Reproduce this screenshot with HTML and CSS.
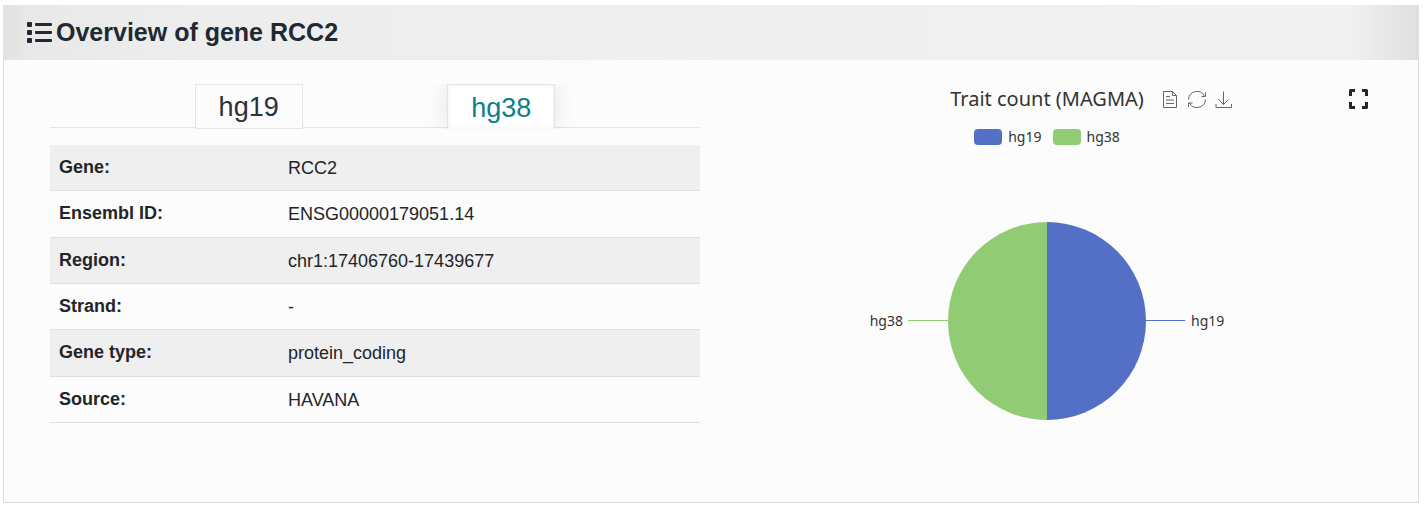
FILE: index.html
```html
<!DOCTYPE html>
<html lang="en">
<head>
<meta charset="utf-8">
<meta name="viewport" content="width=device-width, initial-scale=1">
<title>Overview of gene RCC2</title>
<link rel="stylesheet" href="styles.css">
</head>
<body>
<section class="card">
  <header class="card-header">
    <svg class="list-icon" viewBox="0 0 25 22" aria-hidden="true">
      <rect x="0" y="1" width="5" height="5" rx="1"/><rect x="0" y="9" width="5" height="5" rx="1"/><rect x="0" y="17" width="5" height="5" rx="1"/>
      <rect x="8" y="2" width="17" height="3" rx="1"/><rect x="8" y="10" width="17" height="3" rx="1"/><rect x="8" y="18" width="17" height="3" rx="1"/>
    </svg>
    <h1 class="card-title">Overview of gene RCC2</h1>
  </header>
  <div class="card-body">
    <div class="details">
      <div class="tabs" role="tablist">
        <button class="tab" type="button" role="tab" aria-selected="false">hg19</button>
        <button class="tab tab-active" type="button" role="tab" aria-selected="true">hg38</button>
      </div>
      <table class="gene-table">
        <tbody>
          <tr><th scope="row">Gene:</th><td>RCC2</td></tr>
          <tr><th scope="row">Ensembl ID:</th><td>ENSG00000179051.14</td></tr>
          <tr><th scope="row">Region:</th><td>chr1:17406760-17439677</td></tr>
          <tr><th scope="row">Strand:</th><td>-</td></tr>
          <tr><th scope="row">Gene type:</th><td>protein_coding</td></tr>
          <tr><th scope="row">Source:</th><td>HAVANA</td></tr>
        </tbody>
      </table>
    </div>
    <div class="chart">
      <div class="chart-head">
        <h2 class="chart-title">Trait count (MAGMA)</h2>
        <div class="toolbox">
          <button class="tool" type="button" aria-label="Data view">
            <svg viewBox="0 0 20 20"><path d="M3.500 2.500h9l4 4v12h-13zM12.500 2.500v4h4M6 7.500h4M6 11h8M6 14.500h8"/></svg>
          </button>
          <button class="tool" type="button" aria-label="Restore">
            <svg viewBox="0 0 20 20"><path d="M1.500 10.500A8.500 8.500 0 0 1 17.500 7M18.500 10.500A8.500 8.500 0 0 1 2.500 14M18.500 3.500v4h-4M1.500 18v-4h4"/></svg>
          </button>
          <button class="tool" type="button" aria-label="Save as image">
            <svg viewBox="0 0 20 20"><path d="M9.500 2.500v13M4.500 10.500l5 5 5-5M2 15v3.500h15.500V15"/></svg>
          </button>
        </div>
        <button class="expand" type="button" aria-label="Full screen">
          <svg viewBox="0 0 20 20"><path d="M2.500 7V1.500H7M14 1.500h4.500V7M18.500 13v5.500H14M7 18.500H2.500V13"/></svg>
        </button>
      </div>
      <ul class="legend">
        <li class="legend-item"><span class="swatch swatch-blue"></span>hg19</li>
        <li class="legend-item"><span class="swatch swatch-green"></span>hg38</li>
      </ul>
      <svg class="pie" viewBox="0 0 360 200" role="img" aria-label="hg19 and hg38 with equal shares">
        <path fill="#5470c6" d="M180 1a99 99 0 0 1 0 198z"/>
        <path fill="#91cc75" d="M180 1a99 99 0 0 0 0 198z"/>
        <path stroke="#5470c6" d="M279 99.500h39"/>
        <path stroke="#91cc75" d="M81 99.500H41"/>
        <text x="324" y="105">hg19</text>
        <text x="36" y="105" text-anchor="end">hg38</text>
      </svg>
    </div>
  </div>
</section>
</body>
</html>
```
FILE: styles.css
```css
* {
  box-sizing: border-box;
}

body {
  margin: 0;
  padding: 5px 6px 7px 3px;
  background: #fff;
  color: #212529;
  font-family: "Liberation Sans", Arial, sans-serif;
}

button {
  margin: 0;
  padding: 0;
  border: 0;
  background: none;
  color: inherit;
  font: inherit;
  cursor: pointer;
}

.card {
  border: 1px solid #dcdcdc;
  border-top: 0;
  background: #fcfcfc;
}

.card-header {
  display: flex;
  align-items: center;
  gap: 4px;
  height: 55px;
  margin: 0 -1px;
  padding: 0 24px 2px;
  background: linear-gradient(90deg, #e2e2e2 0, #e9e9e9 2%, #ededed 13%, #f1f1f1 95%, #dfdfdf 100%);
  color: #212933;
}

.list-icon {
  width: 25px;
  height: 22px;
  fill: currentColor;
}

.card-title {
  margin: 0;
  font-size: 25px;
  line-height: 30px;
}

.card-body {
  display: grid;
  grid-template-columns: 650fr 642fr;
  gap: 26px;
  padding: 24px 50px 79px 46px;
}

.tabs {
  display: flex;
  justify-content: space-evenly;
  overflow: hidden;
  background: linear-gradient(#e3e4ec, #e3e4ec) 0 43px / 100% 1px no-repeat;
}

.tab {
  height: 45px;
  padding: 1px 23px 0;
  border: 1px solid #e3e4ec;
  background: #fcfcfc;
  color: #2c3038;
  font-size: 27px;
  line-height: 42px;
}

.tab-active {
  border-bottom: 0;
  background: #fff;
  box-shadow: 0 0 22px rgba(0, 0, 0, 0.1), inset 0 0 4px #eeeef4;
  color: #0b7f8b;
}

.gene-table {
  width: 100%;
  height: 278px;
  margin-top: 16px;
  border-collapse: collapse;
  font-size: 18px;
  line-height: 27px;
  text-align: left;
}

.gene-table th,
.gene-table td {
  padding: 10px 9px 8px;
  border-bottom: 1px solid #dee0e3;
}

.gene-table th {
  width: 229px;
  padding-top: 9px;
  padding-bottom: 9px;
}

.gene-table tr:nth-child(odd) {
  background: #efefef;
}

.chart {
  display: flex;
  flex-direction: column;
  align-items: center;
  color: #333;
  font-family: "Noto Sans", "Open Sans", sans-serif;
  font-size: 14px;
}

.chart-head {
  display: grid;
  grid-template-columns: 1fr auto 1fr;
  align-items: center;
  width: 100%;
  height: 30px;
}

.chart-title {
  grid-column: 2;
  margin: 0;
  font-size: 20px;
  font-weight: 400;
  line-height: 30px;
}

.toolbox {
  grid-row: 1;
  grid-column: 3;
  display: flex;
  gap: 7px;
  margin-left: 16px;
}

.tool,
.expand {
  display: flex;
  width: 20px;
  height: 20px;
}

.tool svg,
.expand svg {
  width: 20px;
  height: 20px;
  fill: none;
  stroke: #666;
}

.expand {
  grid-row: 1;
  grid-column: 3;
  justify-self: end;
}

.expand svg {
  stroke: #212529;
  stroke-width: 3;
  stroke-linejoin: round;
}

.legend {
  display: flex;
  gap: 11px;
  margin: 13px 0 0;
  padding: 0;
  line-height: 20px;
  list-style: none;
}

.legend-item {
  display: flex;
  align-items: center;
  gap: 6px;
}

.swatch {
  width: 28px;
  height: 16px;
  border-radius: 4px;
}

.swatch-blue {
  background: #5470c6;
}

.swatch-green {
  background: #91cc75;
}

.pie {
  width: 360px;
  height: 200px;
  margin-top: 74px;
  overflow: visible;
}

.pie text {
  fill: #333;
}
```
